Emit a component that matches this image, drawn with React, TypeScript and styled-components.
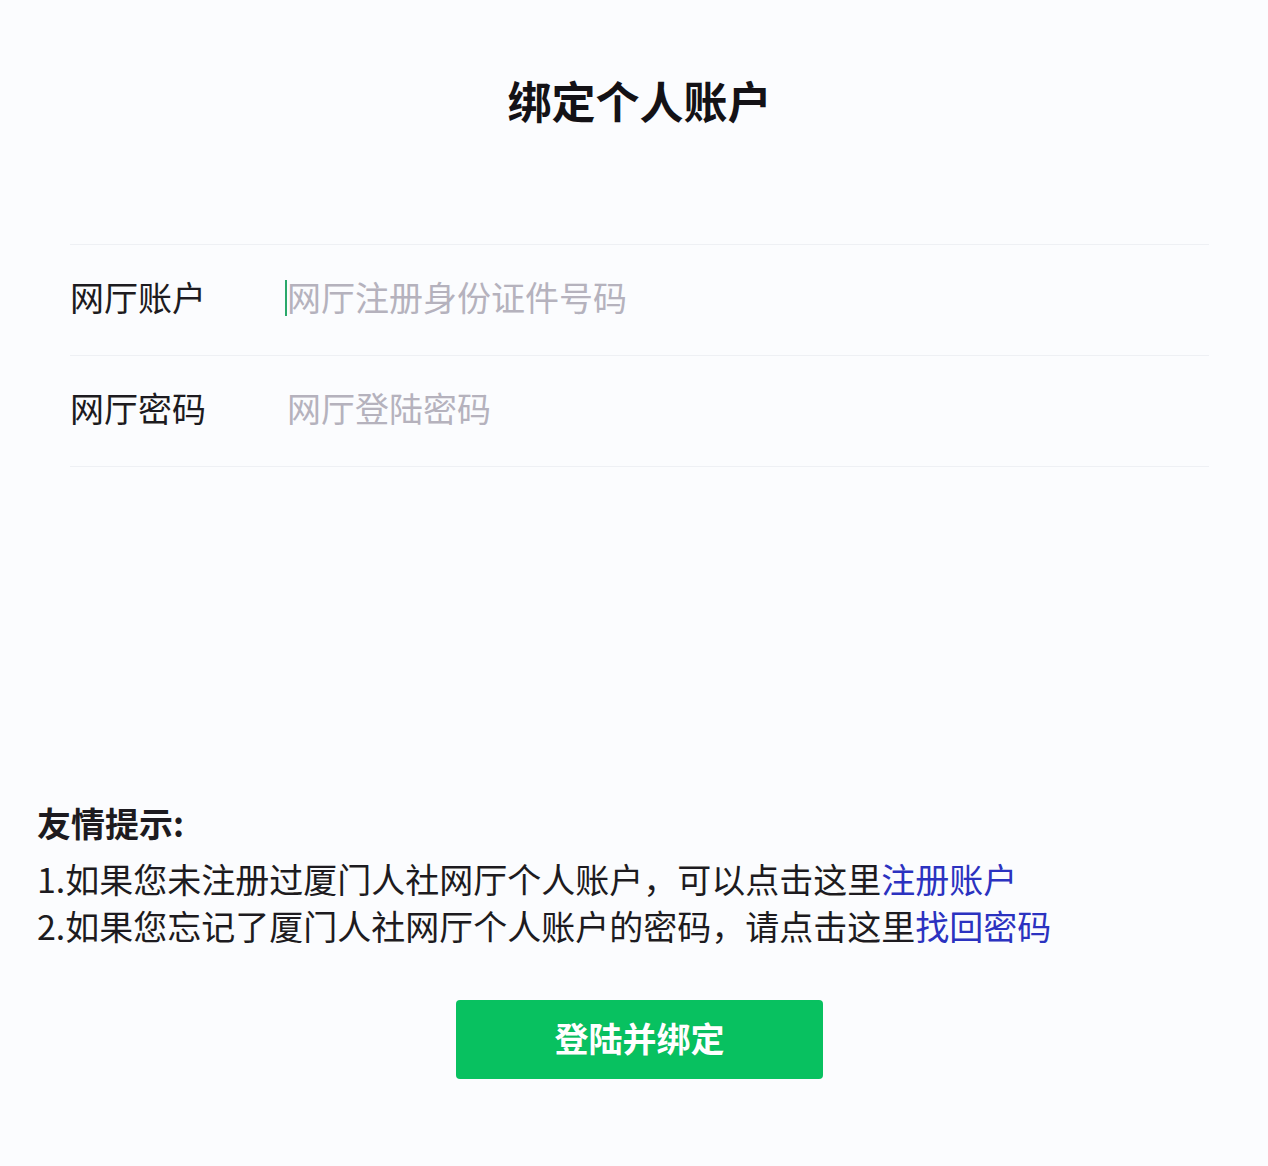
import React from "react";
import styled, { createGlobalStyle } from "styled-components";

const GlobalStyle = createGlobalStyle`
  html, body {
    margin: 0;
    padding: 0;
    background: #fbfcfe;
    overflow-x: hidden;
  }
  body {
    font-family: "Noto Sans CJK SC", "Noto Sans", sans-serif;
    color: #1d1b20;
  }
  * { box-sizing: border-box; }
`;

const Page = styled.main`
  min-height: 1166px;
  padding: 69px 0 0 11px;
  display: flex;
  flex-direction: column;
`;

const Title = styled.h1`
  margin: 0;
  text-align: center;
  font-size: 44px;
  line-height: 62px;
  font-weight: 700;
  color: #141216;
`;

const Form = styled.form`
  margin: 113px 59px 0 59px;
  border-bottom: 1px solid #eef0f4;
`;

const Row = styled.label`
  display: flex;
  align-items: center;
  height: 111px;
  padding-bottom: 8px;
  border-top: 1px solid #eef0f4;
`;

const Label = styled.span`
  width: 215px;
  flex: none;
  font-size: 34px;
  line-height: 47px;
  color: #1d1b20;
`;

const Caret = styled.span<{ $show: boolean }>`
  width: 2px;
  height: 36px;
  margin-top: 4px;
  flex: none;
  background: ${(p) => (p.$show ? "#2aa86a" : "transparent")};
`;

const Input = styled.input`
  flex: 1;
  border: none;
  outline: none;
  background: transparent;
  padding: 0;
  font-family: "Noto Sans CJK SC", "Noto Sans", sans-serif;
  font-size: 34px;
  line-height: 47px;
  color: #1d1b20;
  &::placeholder {
    color: #b5b2bd;
  }
`;

const Tips = styled.section`
  margin: 332px 0 0 26px;
`;

const TipTitle = styled.h2`
  margin: 0 0 9px 0;
  font-size: 34px;
  line-height: 47px;
  font-weight: 700;
  color: #1d1b20;
`;

const TipLine = styled.p`
  margin: 0;
  font-size: 34px;
  line-height: 47px;
  color: #1d1b20;
`;

const Link = styled.a`
  color: #2b32c0;
  text-decoration: none;
`;

const ButtonBar = styled.div`
  display: flex;
  justify-content: center;
  margin-top: 51px;
`;

const Button = styled.button`
  width: 367px;
  height: 79px;
  border: none;
  border-radius: 4px;
  background: #08c160;
  color: #ffffff;
  font-family: "Noto Sans CJK SC", "Noto Sans", sans-serif;
  font-size: 34px;
  font-weight: 700;
  padding: 0 0 4px 0;
  cursor: pointer;
  text-shadow: 0 0 1px rgba(0, 0, 0, 0.15);
`;

export default function App() {
  return (
    <>
      <GlobalStyle />
      <Page>
        <Title>绑定个人账户</Title>
        <Form onSubmit={(e) => e.preventDefault()}>
          <Row>
            <Label>网厅账户</Label>
            <Caret $show={true} />
            <Input type="text" placeholder="网厅注册身份证件号码" />
          </Row>
          <Row>
            <Label>网厅密码</Label>
            <Caret $show={false} />
            <Input type="password" placeholder="网厅登陆密码" />
          </Row>
        </Form>
        <Tips>
          <TipTitle>友情提示:</TipTitle>
          <TipLine>
            1.如果您未注册过厦门人社网厅个人账户，可以点击这里<Link href="#">注册账户</Link>
          </TipLine>
          <TipLine>
            2.如果您忘记了厦门人社网厅个人账户的密码，请点击这里<Link href="#">找回密码</Link>
          </TipLine>
        </Tips>
        <ButtonBar>
          <Button type="button">登陆并绑定</Button>
        </ButtonBar>
      </Page>
    </>
  );
}
